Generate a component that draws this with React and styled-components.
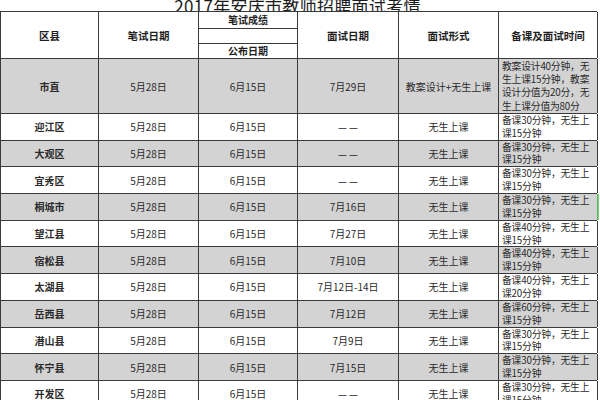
import React from "react";
import styled, { createGlobalStyle } from "styled-components";

const Global = createGlobalStyle`
  html, body { margin: 0; padding: 0; background: #fff; }
  body { font-family: "Noto Sans CJK SC", "Noto Sans", sans-serif; color: #222; }
`;

const COLS = "98px 100px 99px 101px 100px 99px";

const Page = styled.div`
  width: 600px;
  height: 400px;
  overflow: hidden;
  background: #fff;
`;

const Title = styled.div`
  height: 11px;
  width: 597px;
  overflow: hidden;
  display: flex;
  justify-content: center;
  align-items: flex-end;
`;

const TitleText = styled.span`
  font-size: 17px;
  line-height: 17px;
  margin-bottom: -3px;
  color: #1a1a1a;
  letter-spacing: 0.3px;
  padding-right: 2px;
`;

const Table = styled.div`
  width: 597px;
  border-top: 1px solid #3a3a3a;
  border-left: 1px solid #3a3a3a;
  box-sizing: border-box;
`;

const Row = styled.div`
  display: grid;
  grid-template-columns: ${COLS};
  height: ${(p) => p.$h}px;
  background: ${(p) => (p.$gray ? "#d3d3d3" : "#fff")};
  border-bottom: 1px solid #3a3a3a;
  box-sizing: border-box;
`;

const Cell = styled.div`
  border-right: 1px solid #3a3a3a;
  display: flex;
  align-items: center;
  justify-content: center;
  font-size: 10px;
  color: #2a2a2a;
  font-weight: ${(p) => (p.$bold ? 700 : 400)};
  overflow: hidden;
  white-space: nowrap;
`;

const HeadCell = styled(Cell)`
  font-size: 10.5px;
  font-weight: 700;
  color: #1e1e1e;
`;

const SplitCell = styled.div`
  border-right: 1px solid #3a3a3a;
  display: grid;
  grid-template-rows: 17px 15px 1fr;
`;

const SubCell = styled.div`
  display: flex;
  align-items: center;
  justify-content: center;
  font-size: 10px;
  line-height: 12px;
  font-weight: 700;
  color: #1e1e1e;
  overflow: hidden;
  border-bottom: ${(p) => (p.$last ? "none" : "1px solid #3a3a3a")};
`;

const NoteCell = styled.div`
  border-right: 1px solid ${(p) => (p.$green ? "#5cb85c" : "#3a3a3a")};
  ${(p) => (p.$green ? "box-shadow: 1px 0 0 #7fcf7f;" : "")}
  padding: ${(p) => (p.$tall ? "1px" : "0")} 0 0 3px;
  font-size: 9.8px;
  letter-spacing: -0.2px;
  line-height: ${(p) => (p.$tall ? "13.2px" : "12.8px")};
  color: #2a2a2a;
  overflow: hidden;
  white-space: nowrap;
`;

const rows = [
  ["迎江区", "——", "30", "15"],
  ["大观区", "——", "30", "15"],
  ["宜秀区", "——", "30", "15"],
  ["桐城市", "7月16日", "30", "15"],
  ["望江县", "7月27日", "40", "15"],
  ["宿松县", "7月10日", "40", "15"],
  ["太湖县", "7月12日-14日", "40", "20"],
  ["岳西县", "7月12日", "60", "15"],
  ["潜山县", "7月9日", "30", "15"],
  ["怀宁县", "7月15日", "30", "15"],
  ["开发区", "——", "30", "15"],
];

export default function App() {
  return (
    <Page>
      <Global />
      <Title>
        <TitleText>2017年安庆市教师招聘面试考情</TitleText>
      </Title>
      <Table>
        <Row $h={47}>
          <HeadCell>区县</HeadCell>
          <HeadCell>笔试日期</HeadCell>
          <SplitCell>
            <SubCell>笔试成绩</SubCell>
            <SubCell />
            <SubCell $last>公布日期</SubCell>
          </SplitCell>
          <HeadCell>面试日期</HeadCell>
          <HeadCell>面试形式</HeadCell>
          <HeadCell>备课及面试时间</HeadCell>
        </Row>
        <Row $h={55} $gray>
          <Cell $bold>市直</Cell>
          <Cell>5月28日</Cell>
          <Cell>6月15日</Cell>
          <Cell>7月29日</Cell>
          <Cell>教案设计+无生上课</Cell>
          <NoteCell $tall>
            教案设计40分钟，无
            <br />
            生上课15分钟，教案
            <br />
            设计分值为20分，无
            <br />
            生上课分值为80分
          </NoteCell>
        </Row>
        {rows.map(([name, date, prep, teach], i) => (
          <Row key={name} $h={26.7} $gray={i % 2 === 1}>
            <Cell $bold>{name}</Cell>
            <Cell>5月28日</Cell>
            <Cell>6月15日</Cell>
            <Cell>{date === "——" ? "— —" : date}</Cell>
            <Cell>无生上课</Cell>
            <NoteCell $green={name === "桐城市"}>
              备课{prep}分钟，无生上
              <br />
              课{teach}分钟
            </NoteCell>
          </Row>
        ))}
      </Table>
    </Page>
  );
}
